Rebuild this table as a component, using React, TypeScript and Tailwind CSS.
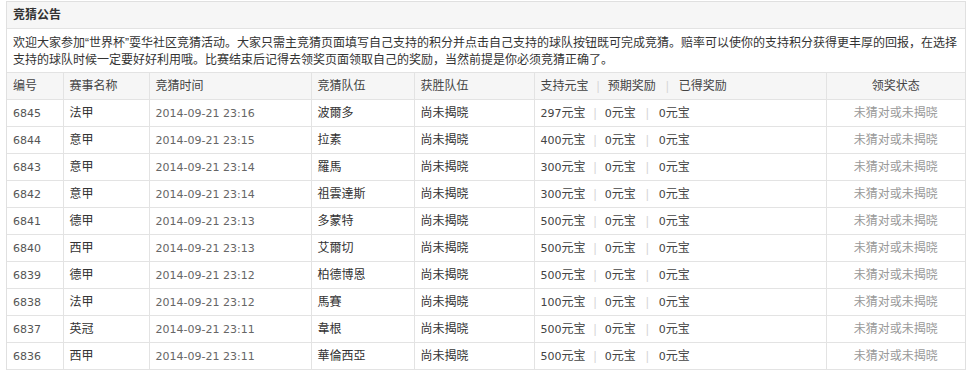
import React from 'react'

type Row = {
  id: number
  league: string
  time: string
  team: string
  stake: number
}

const rows: Row[] = [
  { id: 6845, league: '法甲', time: '2014-09-21 23:16', team: '波爾多', stake: 297 },
  { id: 6844, league: '意甲', time: '2014-09-21 23:15', team: '拉素', stake: 400 },
  { id: 6843, league: '意甲', time: '2014-09-21 23:14', team: '羅馬', stake: 300 },
  { id: 6842, league: '意甲', time: '2014-09-21 23:14', team: '祖雲達斯', stake: 300 },
  { id: 6841, league: '德甲', time: '2014-09-21 23:13', team: '多蒙特', stake: 500 },
  { id: 6840, league: '西甲', time: '2014-09-21 23:13', team: '艾爾切', stake: 500 },
  { id: 6839, league: '德甲', time: '2014-09-21 23:12', team: '柏德博恩', stake: 500 },
  { id: 6838, league: '法甲', time: '2014-09-21 23:12', team: '馬賽', stake: 100 },
  { id: 6837, league: '英冠', time: '2014-09-21 23:11', team: '韋根', stake: 500 },
  { id: 6836, league: '西甲', time: '2014-09-21 23:11', team: '華倫西亞', stake: 500 },
]

const cell = 'h-[27px] border border-[#e3e3e3] px-1.5'

// digits in the original are a Tahoma-like face, DejaVu at 11px has the same widths
const Num = ({ children }: { children: React.ReactNode }) => (
  <span className="font-['DejaVu_Sans'] text-[11px]">{children}</span>
)

const Sep = ({ wide }: { wide?: boolean }) => (
  <span className={wide ? 'mx-[10px] text-[#d6d6d6]' : 'mx-2 text-[#d6d6d6]'}>|</span>
)

export default function App() {
  return (
    <div
      className="bg-white pt-px pl-1.5 text-[12px] leading-[17px] text-[#444]"
      style={{ fontFamily: '"Liberation Sans", "Noto Sans CJK SC", sans-serif' }}
    >
      <div className="w-[960px] border border-[#e0e0e0]">
        <div className="flex h-[27px] items-center border-b border-[#e3e3e3] bg-[#f6f6f6] px-1.5">
          <span className="font-bold text-[#333]">竞猜公告</span>
        </div>
        <div className="px-1.5 pt-[6px] pb-[3px] text-[#333]">
          欢迎大家参加“世界杯”耍华社区竞猜活动。大家只需主竞猜页面填写自己支持的积分并点击自己支持的球队按钮既可完成竞猜。赔率可以使你的支持积分获得更丰厚的回报，在选择
          <br />
          支持的球队时候一定要好好利用哦。比赛结束后记得去领奖页面领取自己的奖励，当然前提是你必须竞猜正确了。
        </div>
        <table className="w-full table-fixed border-collapse">
          <colgroup>
            <col className="w-[56px]" />
            <col className="w-[86px]" />
            <col className="w-[162px]" />
            <col className="w-[103px]" />
            <col className="w-[120px]" />
            <col className="w-[292px]" />
            <col />
          </colgroup>
          <thead>
            <tr className="bg-[#f6f6f6] font-normal text-[#444]">
              <th className={`${cell} border-l-0 text-left font-normal`}>编号</th>
              <th className={`${cell} text-left font-normal`}>赛事名称</th>
              <th className={`${cell} text-left font-normal`}>竞猜时间</th>
              <th className={`${cell} text-left font-normal`}>竞猜队伍</th>
              <th className={`${cell} text-left font-normal`}>获胜队伍</th>
              <th className={`${cell} text-left font-normal`}>
                支持元宝
                <Sep />
                预期奖励
                <Sep wide />
                已得奖励
              </th>
              <th className={`${cell} border-r-0 text-center font-normal`}>领奖状态</th>
            </tr>
          </thead>
          <tbody>
            {rows.map((r) => (
              <tr key={r.id}>
                <td className={`${cell} border-l-0 text-[#555]`}>
                  <Num>{r.id}</Num>
                </td>
                <td className={`${cell} text-[#333]`}>{r.league}</td>
                <td className={`${cell} text-[#666]`}>
                  <Num>{r.time}</Num>
                </td>
                <td className={`${cell} text-[#333]`}>{r.team}</td>
                <td className={`${cell} text-[#333]`}>尚未揭晓</td>
                <td className={`${cell} text-[#444]`}>
                  <Num>{r.stake}</Num>元宝
                  <Sep />
                  <Num>0</Num>元宝
                  <Sep wide />
                  <Num>0</Num>元宝
                </td>
                <td className={`${cell} border-r-0 text-center text-[#999]`}>未猜对或未揭晓</td>
              </tr>
            ))}
          </tbody>
        </table>
      </div>
    </div>
  )
}
